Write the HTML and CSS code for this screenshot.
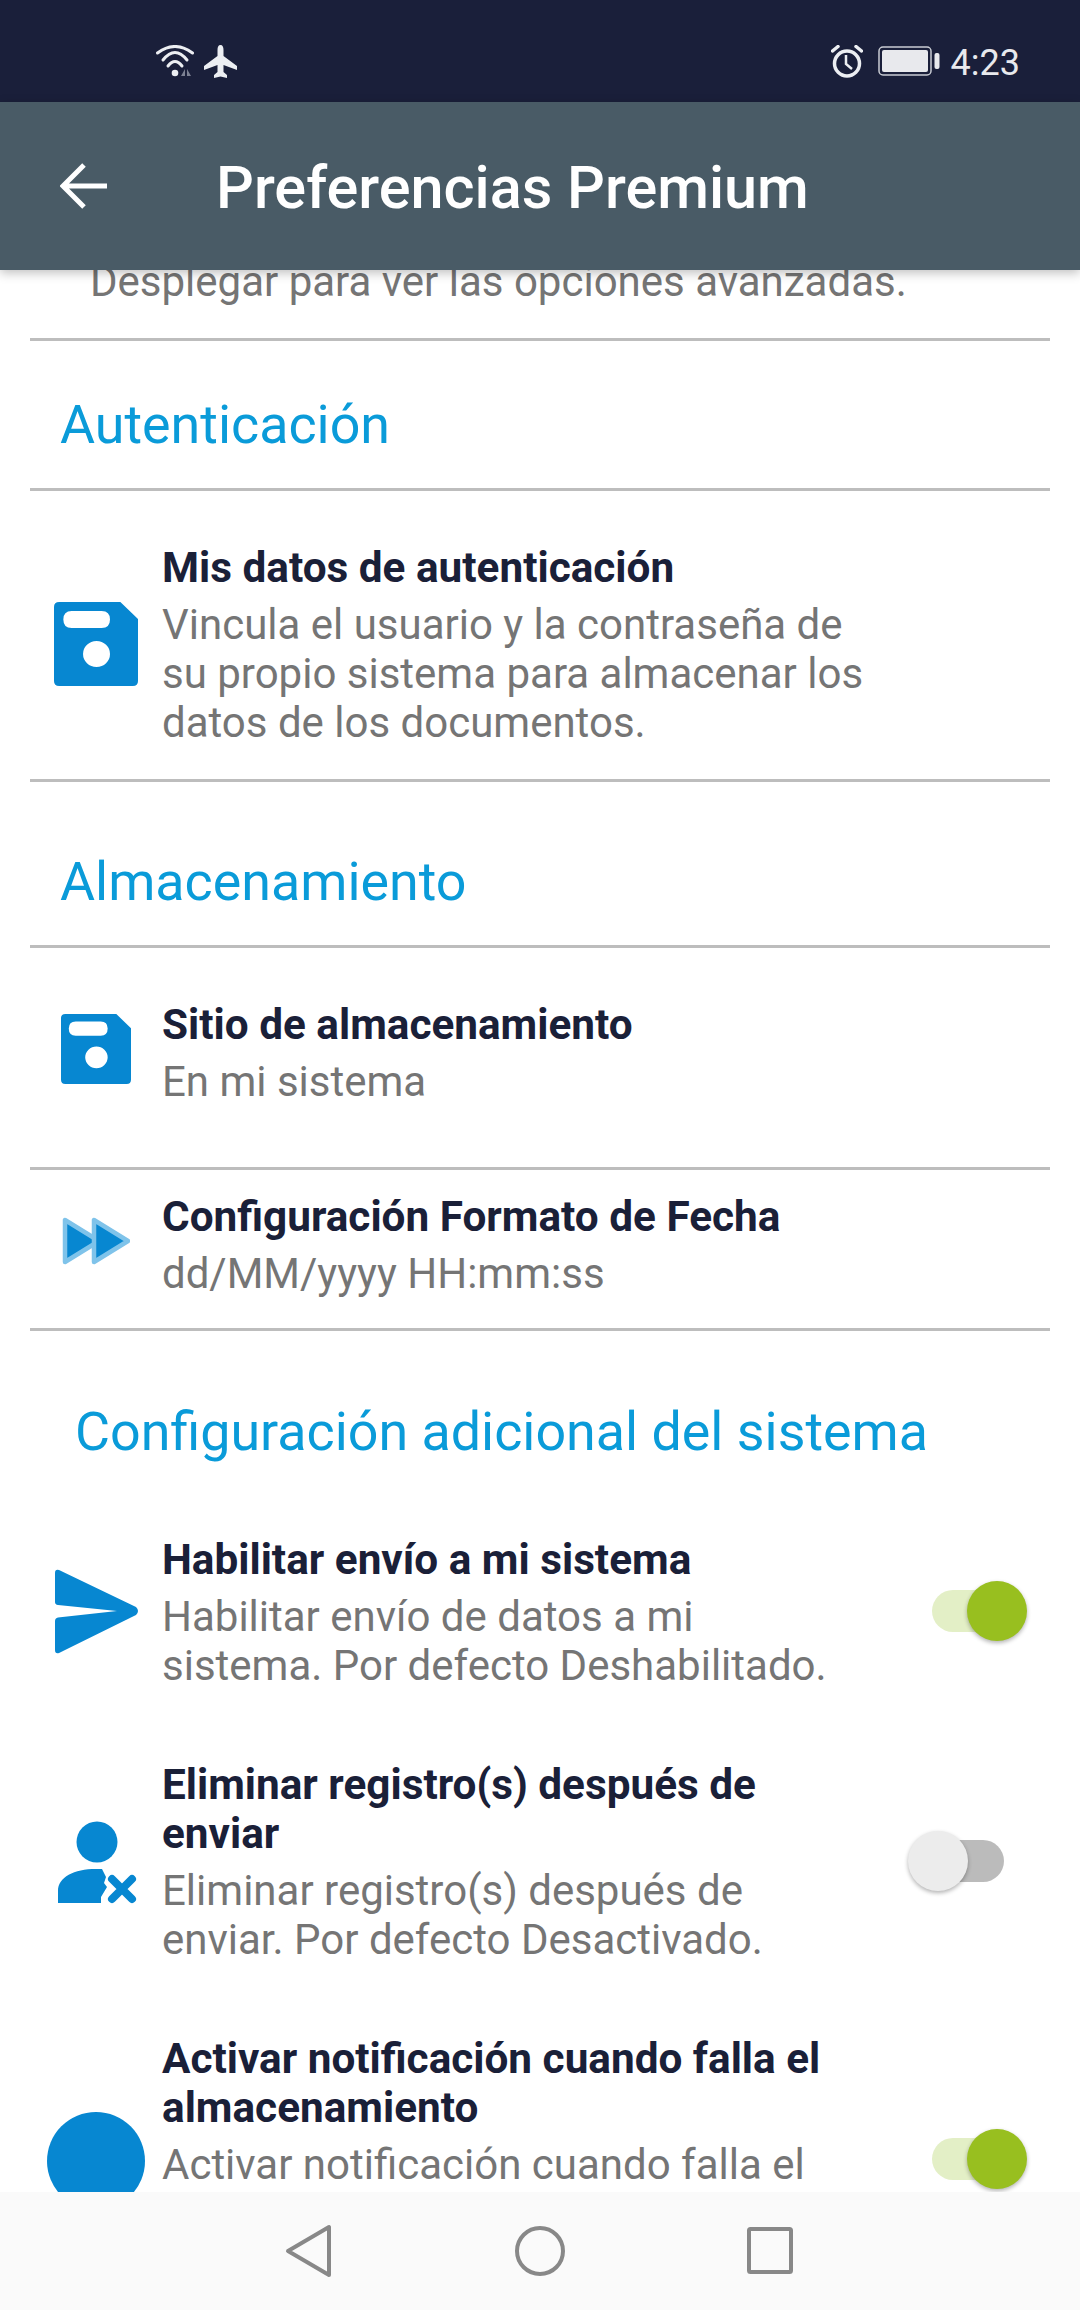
FILE: index.html
```html
<!DOCTYPE html>
<html lang="es">
<head>
<meta charset="utf-8">
<title>Preferencias Premium</title>
<link rel="stylesheet" href="styles.css">
</head>
<body>
<svg class="defs" width="0" height="0" aria-hidden="true">
  <symbol id="floppy" viewBox="0 0 81 84" preserveAspectRatio="none">
    <path fill-rule="evenodd" d="M5 0H64L81 17V79Q81 84 76 84H5Q0 84 0 79V5Q0 0 5 0ZM17 9Q9 9 9 17.5Q9 26 17 26H46Q54 26 54 17.5Q54 9 46 9ZM41 39A13 13 0 1 0 41 65A13 13 0 1 0 41 39Z"/>
  </symbol>
</svg>
<div class="status">
  <svg class="st-wifi" viewBox="0 0 40 32"><g fill="none" stroke="#eceef2" stroke-width="3" stroke-linecap="round"><path d="M1.5 8Q19-5 36.500 8"/><path d="M7 15Q19 0 31 15"/><path d="M12 21Q19 12 26 21"/></g><circle cx="19" cy="28" r="3.300" fill="#eceef2"/><path d="M29 24V31H25ZM31 24V31H35Z" fill="#7d8193"/></svg>
  <svg class="st-plane" viewBox="0 0 33 33"><path fill="#eceef2" d="M16.500 0C18.700 0 19.500 2 19.500 5V11L33 21V25L19.500 20V27L23 30V33L16.500 31.500L10 33V30L13.500 27V20L0 25V21L13.500 11V5C13.500 2 14.300 0 16.500 0Z"/></svg>
  <div class="status-right">
    <svg class="st-alarm" viewBox="0 0 32 33"><g fill="none" stroke="#eceef2" stroke-width="3.500"><circle cx="16" cy="18.500" r="12.500"/><path d="M15 10V19L21 24" stroke-width="2.500"/><path d="M1.500 6L7 1.500M30.500 6L25 1.500" stroke-linecap="round"/></g></svg>
    <svg class="st-batt" viewBox="0 0 62 30"><rect x="1" y="1" width="52" height="28" rx="4" fill="none" stroke="#c9ccd4" stroke-width="1.500"/><rect x="4" y="4" width="46" height="22" rx="2" fill="#e8e9ed"/><rect x="56.500" y="7" width="5" height="16" rx="2" fill="#e8e9ed"/></svg>
    <span class="time">4:23</span>
  </div>
</div>
<header class="appbar">
  <svg class="back" viewBox="0 0 49 46"><path d="M47 23H4M24 2L3 23L24 44" fill="none" stroke="#fff" stroke-width="5"/></svg>
  <h1 class="appbar-title">Preferencias Premium</h1>
</header>
<main class="scroll">
  <div class="content">
    <p class="hint">Desplegar para ver las opciones avanzadas.</p>
    <h2 class="section sec-a">Autenticación</h2>
    <div class="row row-auth">
      <div class="ico"><svg class="i-f1"><use href="#floppy"/></svg></div>
      <div class="txt">
        <div class="t">Mis datos de autenticación</div>
        <div class="d">Vincula el usuario y la contraseña de su propio sistema para almacenar los datos de los documentos.</div>
      </div>
    </div>
    <h2 class="section sec-b">Almacenamiento</h2>
    <div class="row row-site">
      <div class="ico"><svg class="i-f2"><use href="#floppy"/></svg></div>
      <div class="txt">
        <div class="t">Sitio de almacenamiento</div>
        <div class="d">En mi sistema</div>
      </div>
    </div>
    <div class="row row-date">
      <div class="ico">
        <svg class="i-ff" viewBox="0 0 68 48"><g fill="#0787d1" stroke="#7fc3ea" stroke-width="4.500" stroke-linejoin="round"><path d="M3 3V45L37 24Z"/><path d="M32 3V45L66 24Z"/></g></svg>
      </div>
      <div class="txt">
        <div class="t">Configuración Formato de Fecha</div>
        <div class="d">dd/MM/yyyy HH:mm:ss</div>
      </div>
    </div>
    <h2 class="section sec-c">Configuración adicional del sistema</h2>
    <div class="row sw row-send">
      <div class="ico">
        <svg class="i-send" viewBox="0 0 84 85"><path fill="#0787d1" d="M0 4Q0 0 4 1L81 38Q85 42 81 46L4 84Q0 85 0 81V52Q0 49 3 48.500L62 42L3 36Q0 35.500 0 33Z"/></svg>
      </div>
      <div class="txt">
        <div class="t">Habilitar envío a mi sistema</div>
        <div class="d">Habilitar envío de datos a mi sistema. Por defecto Deshabilitado.</div>
      </div>
      <div class="toggle on"><span class="knob"></span></div>
    </div>
    <div class="row sw row-del">
      <div class="ico">
        <svg class="i-user" viewBox="0 0 79 83"><g fill="#0787d1"><circle cx="39" cy="21" r="20.500"/><path d="M0 82V70C0 56 16 48 38 48H44L48 56L46 62L49 66L43 76V82Z"/></g><path d="M54 58L74 78M74 58L54 78" stroke="#0787d1" stroke-width="8" stroke-linecap="round"/></svg>
      </div>
      <div class="txt">
        <div class="t">Eliminar registro(s) después de enviar</div>
        <div class="d">Eliminar registro(s) después de enviar. Por defecto Desactivado.</div>
      </div>
      <div class="toggle"><span class="knob"></span></div>
    </div>
    <div class="row sw row-notif">
      <div class="ico"><span class="i-dot"></span></div>
      <div class="txt">
        <div class="t">Activar notificación cuando falla el almacenamiento</div>
        <div class="d">Activar notificación cuando falla el almacenamiento. Por defecto Activado.</div>
      </div>
      <div class="toggle on"><span class="knob"></span></div>
    </div>
  </div>
</main>
<nav class="navbar">
  <svg class="nav-i" viewBox="0 0 60 60"><path d="M9 30L50 6V54Z" fill="none" stroke="#888" stroke-width="4" stroke-linejoin="round"/></svg>
  <svg class="nav-i" viewBox="0 0 60 60"><circle cx="30" cy="30" r="23" fill="none" stroke="#888" stroke-width="4"/></svg>
  <svg class="nav-i" viewBox="0 0 60 60"><rect x="8" y="8" width="42" height="43" rx="1.500" fill="none" stroke="#888" stroke-width="4"/></svg>
</nav>
</body>
</html>
```
FILE: styles.css
```css
* { box-sizing: border-box; }
html, body { margin: 0; padding: 0; }
body {
  width: 1080px;
  height: 2310px;
  display: flex;
  flex-direction: column;
  overflow: hidden;
  background: #fff;
  font-family: Roboto, "Liberation Sans", sans-serif;
}
.defs { position: absolute; }

.status {
  height: 102px;
  flex: none;
  background: #1a1f3a;
  display: flex;
  align-items: center;
  padding: 20px 60px 0 156px;
  gap: 8px;
}
.st-wifi { width: 40px; height: 32px; }
.st-plane { width: 33px; height: 33px; }
.status-right { margin-left: auto; display: flex; align-items: center; }
.st-alarm { width: 32px; height: 33px; margin-right: 15px; }
.st-batt { width: 62px; height: 30px; margin-right: 11px; }
.time { color: #e8e9ed; font-size: 36px; line-height: 40px; margin-top: 3px; }

.appbar {
  height: 168px;
  flex: none;
  background: #495b66;
  display: flex;
  align-items: center;
  padding-left: 60px;
  box-shadow: 0 3px 10px rgba(0, 0, 0, .25);
  position: relative;
  z-index: 2;
}
.back { width: 49px; height: 46px; margin-right: 107px; }
.appbar-title {
  margin: 3px 0 0;
  color: #fff;
  font-size: 59.400px;
  font-weight: 500;
  line-height: 64px;
}

.scroll { flex: 1; min-height: 0; overflow: hidden; }
.content { margin-top: -12px; }
.hint {
  margin: 0 30px;
  padding: 0 0 32px 60px;
  font-size: 42px;
  line-height: 48px;
  color: #757575;
  border-bottom: 3px solid #bdbdbd;
}
.section {
  margin: 0 30px;
  font-weight: 400;
  font-size: 53.800px;
  line-height: 60px;
  color: #0a9bd9;
}
.sec-a {
  padding: 54px 0 33px 30px;
  border-bottom: 3px solid #bdbdbd;
}
.sec-b {
  padding: 70px 0 33px 30px;
  border-bottom: 3px solid #bdbdbd;
}
.sec-c { padding: 71px 0 0 45px; }

.row {
  margin: 0 30px;
  display: flex;
  align-items: center;
}
.row-auth { padding: 52px 0 32px; border-bottom: 3px solid #bdbdbd; }
.row-site { padding: 52px 0 61px; border-bottom: 3px solid #bdbdbd; }
.row-date { padding: 22px 0 30px; border-bottom: 3px solid #bdbdbd; }
.row-send { margin-top: 73px; }
.row-del { margin-top: 70px; }
.row-notif { margin-top: 70px; }

.ico {
  width: 132px;
  flex: none;
  display: flex;
  justify-content: center;
}
.ico svg { display: block; fill: #0787d1; }
.i-f1 { width: 84px; height: 84px; margin-bottom: 2px; }
.i-f2 { width: 70px; height: 70px; margin-bottom: 8px; }
.i-ff { width: 68px; height: 48px; margin-bottom: 8px; }
.i-send { width: 84px; height: 85px; margin: 0 0 2px 2px; }
.i-user { width: 79px; height: 83px; margin-left: 3px; }
.i-dot {
  width: 98px;
  height: 98px;
  border-radius: 50%;
  background: #0787d1;
}

.txt { width: 710px; }
.sw .txt { width: 672px; }
.t {
  font-size: 42.300px;
  font-weight: 700;
  line-height: 49px;
  color: #1a2038;
}
.d {
  margin-top: 8px;
  font-size: 42px;
  line-height: 49px;
  color: #757575;
}

.toggle {
  position: relative;
  width: 72px;
  height: 42px;
  margin: 0 0 3px 98px;
  flex: none;
  border-radius: 21px;
  background: #bbbbbb;
}
.toggle.on { background: #e3efc6; }
.knob {
  position: absolute;
  left: -24px;
  top: -9px;
  width: 60px;
  height: 60px;
  border-radius: 50%;
  background: #ececec;
  box-shadow: 0 2px 4px rgba(0, 0, 0, .3);
}
.toggle.on .knob { left: 35px; background: #98bf1f; }

.navbar {
  height: 118px;
  flex: none;
  background: #fafafa;
  position: relative;
  z-index: 2;
  display: flex;
  justify-content: center;
  align-items: center;
  gap: 171px;
}
.nav-i { width: 60px; height: 60px; }
```
